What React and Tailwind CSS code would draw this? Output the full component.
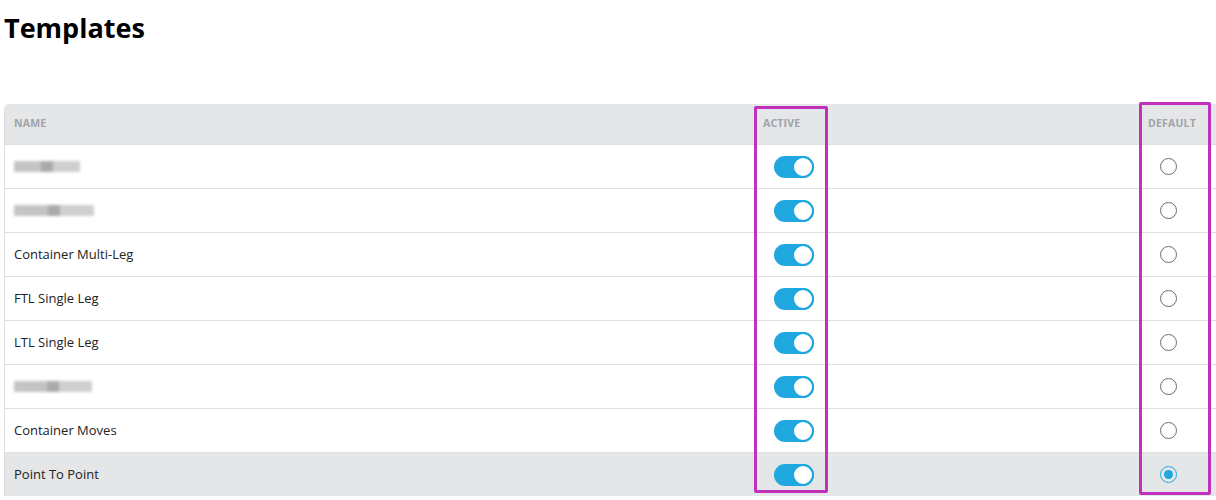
import { useState } from "react";

const rows = [
  { name: null, blur: 66 },
  { name: null, blur: 80 },
  { name: "Container Multi-Leg" },
  { name: "FTL Single Leg" },
  { name: "LTL Single Leg" },
  { name: null, blur: 78 },
  { name: "Container Moves" },
  { name: "Point To Point", selected: true },
];

function Toggle({ on }) {
  return (
    <div
      className={`w-[40px] h-[22px] rounded-full flex items-center ${
        on ? "bg-[#1fa8df] justify-end" : "bg-gray-300 justify-start"
      }`}
    >
      <div className="w-[22px] h-[22px] rounded-full bg-white border-2 border-[#1fa8df]" />
    </div>
  );
}

function Radio({ checked }) {
  return checked ? (
    <div className="w-[17px] h-[17px] rounded-full border-[1.5px] border-[#1fa8df] flex items-center justify-center">
      <div className="w-[9px] h-[9px] rounded-full bg-[#1fa8df]" />
    </div>
  ) : (
    <div className="w-[17px] h-[17px] rounded-full border-[1.5px] border-[#6b6b6b]" />
  );
}

function Blurred({ width }) {
  return (
    <div className="flex items-center blur-[1.5px]" style={{ width }}>
      <div className="h-[11px] flex-1 bg-[#c4c4c4]" />
      <div className="h-[11px] w-[12px] bg-[#aaaaaa]" />
      <div className="h-[11px] flex-1 bg-[#cfcfcf]" />
    </div>
  );
}

export default function App() {
  const [active] = useState(rows.map(() => true));

  return (
    <div className="bg-white w-[1216px] h-[500px] overflow-hidden font-['Open_Sans',sans-serif] text-[#222]">
      <h1 className="pl-[4px] pt-[8px] text-[27px] leading-[40px] font-bold text-black">
        Templates
      </h1>
      <div className="relative mt-[56px] ml-[4px]">
        <div className="border-l border-[#dcdcdc] rounded-tl-[5px] overflow-hidden">
          <div className="flex h-[40px] items-center bg-[#e5e6e8] text-[10.5px] font-bold tracking-[0.2px] text-[#9ea3a8] uppercase">
            <div className="w-[750px] pl-[9px]">Name</div>
            <div className="w-[74px] pl-[8px]">Active</div>
            <div className="flex-1" />
            <div className="w-[72px] pl-[4px]">Default</div>
          </div>
          {rows.map((r, i) => (
            <div
              key={i}
              className={`flex h-[44px] items-center border-t border-[#dedede] text-[13px] ${
                r.selected ? "bg-[#e5e6e8]" : "bg-white"
              }`}
            >
              <div className="w-[750px] pl-[9px]">
                {r.name ? r.name : <Blurred width={r.blur} />}
              </div>
              <div className="w-[74px] pl-[19px]">
                <Toggle on={active[i]} />
              </div>
              <div className="flex-1" />
              <div className="w-[72px] pl-[16px]">
                <Radio checked={r.selected} />
              </div>
            </div>
          ))}
        </div>
        {/* annotation boxes */}
        <div className="absolute left-[750px] top-[2px] w-[74px] h-[387px] border-[3px] border-[#c12fbd] rounded-[2px]" />
        <div className="absolute left-[1135px] top-[-2px] w-[72px] h-[393px] border-[3px] border-[#c12fbd] rounded-[2px]" />
      </div>
    </div>
  );
}
